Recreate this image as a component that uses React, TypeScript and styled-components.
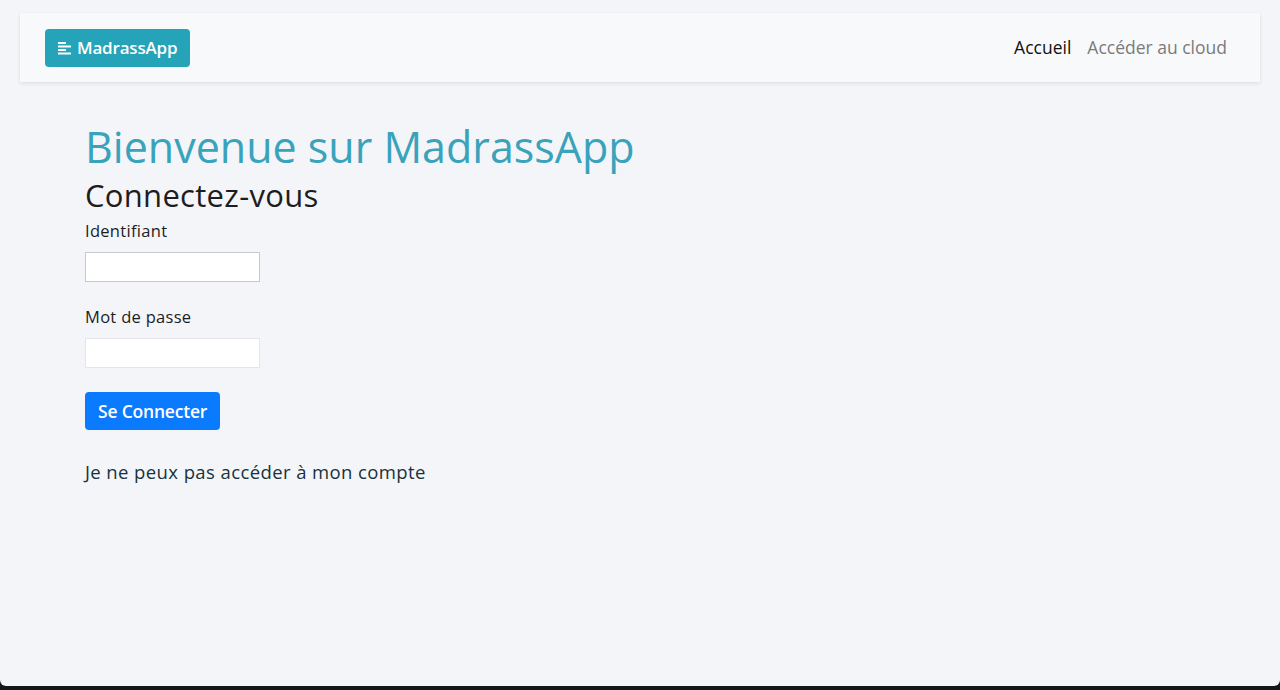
import React from "react";
import styled, { createGlobalStyle } from "styled-components";

const Global = createGlobalStyle`
  html, body { margin: 0; padding: 0; background: #151618; }
  body { font-family: "Open Sans", "Noto Sans", sans-serif; }
  * { box-sizing: border-box; }
`;

const Frame = styled.div`
  height: 686px;
  background: #f4f5f9;
  border-radius: 0 0 6px 6px;
  padding-top: 13px;
  overflow: hidden;
`;

const Navbar = styled.nav`
  margin: 0 20px;
  height: 69px;
  background: #f8f9fb;
  box-shadow: 0 2px 4px rgba(0, 0, 0, 0.08), 0 0 2px rgba(0, 0, 0, 0.04);
  display: flex;
  align-items: center;
  justify-content: space-between;
  padding: 0 33px 0 25px;
`;

const Brand = styled.a`
  display: inline-flex;
  align-items: center;
  gap: 5px;
  height: 38px;
  padding: 0 13px;
  background: #25a3b8;
  border-radius: 4px;
  color: #fff;
  font-weight: 600;
  font-size: 17px;
  letter-spacing: -0.2px;
  text-decoration: none;
`;

const NavLinks = styled.div`
  display: flex;
  align-items: center;
  gap: 16px;
  margin-top: -1px;
`;

const NavLink = styled.a<{ $active?: boolean }>`
  font-size: 17.5px;
  color: ${(p) => (p.$active ? "#111" : "#7b7b7b")};
  text-decoration: none;
`;

const Main = styled.main`
  padding: 40px 85px 0;
`;

const Title = styled.h1`
  margin: 0;
  font-size: 43px;
  font-weight: 500;
  line-height: 50px;
  color: #39a3bc;
`;

const Subtitle = styled.h2`
  margin: 5px 0 7px;
  font-size: 31px;
  font-weight: 500;
  line-height: 36px;
  color: #1d1d1f;
  letter-spacing: 0.3px;
`;

const Form = styled.form`
  display: flex;
  flex-direction: column;
  align-items: flex-start;
`;

const Label = styled.label`
  font-size: 16.5px;
  color: #1d1d1f;
  line-height: 22px;
  letter-spacing: 0.3px;
  margin-bottom: 10px;
`;

const Input = styled.input<{ $soft?: boolean }>`
  width: 175px;
  height: 30px;
  border: 1px solid ${(p) => (p.$soft ? "#e4e5ea" : "#c9c9cd")};
  background: #fff;
  margin-bottom: 24px;
  padding: 0 4px;
  outline: none;
`;

const Button = styled.button`
  height: 38px;
  padding: 0 13px;
  background: #0a7bff;
  color: #fff;
  border: none;
  border-radius: 4px;
  font-family: inherit;
  font-size: 17.5px;
  font-weight: 600;
  letter-spacing: -0.2px;
`;

const Help = styled.p`
  margin: 30px 0 0;
  font-size: 18.5px;
  color: #17323a;
  line-height: 24px;
  letter-spacing: 0.4px;
`;

const MenuIcon = () => (
  <svg width="14" height="14" viewBox="0 0 14 14" fill="#fff">
    <rect x="0" y="1" width="8" height="2" />
    <rect x="0" y="4.5" width="13" height="2" />
    <rect x="0" y="8" width="8" height="2" />
    <rect x="0" y="11.5" width="13" height="2" />
  </svg>
);

export default function App() {
  return (
    <>
      <Global />
      <Frame>
        <Navbar>
          <Brand href="#">
            <MenuIcon />
            MadrassApp
          </Brand>
          <NavLinks>
            <NavLink $active href="#">Accueil</NavLink>
            <NavLink href="#">Accéder au cloud</NavLink>
          </NavLinks>
        </Navbar>
        <Main>
          <Title>Bienvenue sur MadrassApp</Title>
          <Subtitle>Connectez-vous</Subtitle>
          <Form onSubmit={(e) => e.preventDefault()}>
            <Label htmlFor="login">Identifiant</Label>
            <Input id="login" type="text" />
            <Label htmlFor="pwd">Mot de passe</Label>
            <Input id="pwd" type="password" $soft />
            <Button type="submit">Se Connecter</Button>
          </Form>
          <Help>Je ne peux pas accéder à mon compte</Help>
        </Main>
      </Frame>
    </>
  );
}
